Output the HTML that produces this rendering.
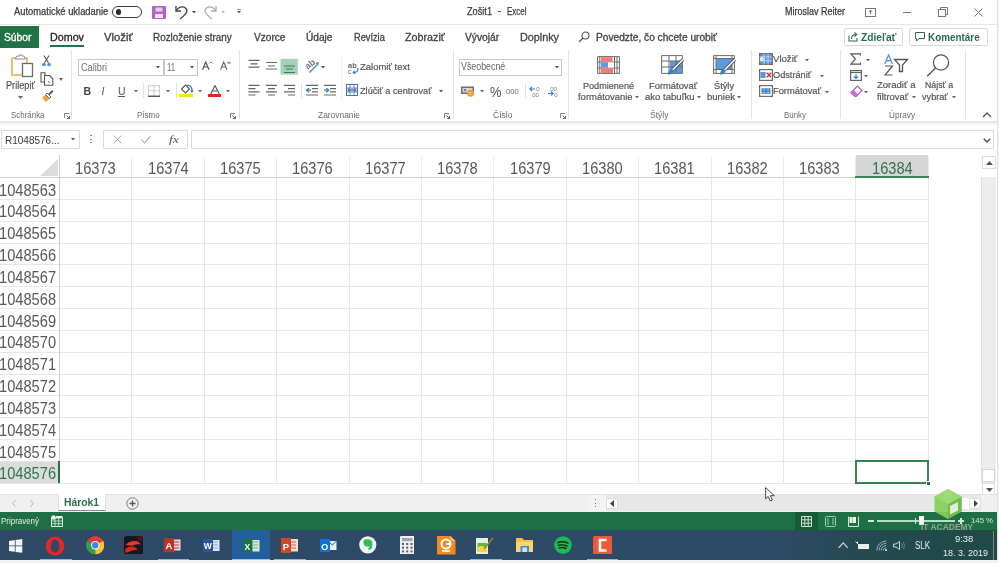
<!DOCTYPE html>
<html><head><meta charset="utf-8">
<style>
*{margin:0;padding:0;box-sizing:border-box}
html,body{width:999px;height:563px;overflow:hidden;background:#fff;font-family:"Liberation Sans",sans-serif;color:#444}
body{filter:blur(0.35px)}
.a{position:absolute}
.t{position:absolute;white-space:nowrap;line-height:1}
#grid{position:absolute;left:0;top:155px;width:981px;height:339px;background:#fff}
.vl{position:absolute;top:0;width:1px;background:#dadada}
.hl{position:absolute;left:0;height:1px;background:#dadada}
.rn{position:absolute;left:0;width:59px;text-align:center;font-size:16px;letter-spacing:-1px;color:#444;line-height:22px}
.cn{position:absolute;top:155px;height:22px;text-align:center;font-size:16px;letter-spacing:-1px;color:#444;line-height:22px}
</style></head><body>
<!-- title bar -->
<div class="a" style="left:0;top:24px;width:997px;height:1px;background:#e6e6e6"></div>
<div class="t" style="top:6.84px;left:13.8px;font-size:10px;color:#3a3a3a;-webkit-text-stroke:0.25px currentColor;;transform:scaleX(0.937);transform-origin:0 0">Automatické ukladanie</div>
<div class="a" style="left:111.5px;top:5.5px;width:30px;height:12px;border:1.3px solid #3a3a3a;border-radius:6px"></div>
<div class="a" style="left:115.5px;top:9px;width:5.5px;height:5.5px;background:#2a2a2a;border-radius:50%"></div>
<svg class="a" style="left:152px;top:6px" width="14" height="13" viewBox="0 0 14 13"><rect x="0" y="0" width="14" height="13" rx="1" fill="#b163c4"/><rect x="3.5" y="1.5" width="7" height="4" fill="#e9c9f0"/><rect x="3" y="8" width="8" height="4" fill="#f4e4f7"/></svg>
<svg class="a" style="left:174px;top:4px" width="15" height="16" viewBox="0 0 15 16"><path d="M2 2 V7 H7" fill="none" stroke="#444" stroke-width="1.4"/><path d="M2.4 6.6 C4.5 3 8.5 2 11.5 4 C14.5 6.5 13 10 6 15" fill="none" stroke="#444" stroke-width="1.3"/></svg>
<svg class="a" style="left:191.8px;top:10.5px" width="4" height="2.5" viewBox="0 0 4 2.5"><path d="M0 0 H4 L2 2.5 Z" fill="#444"/></svg>
<svg class="a" style="left:203px;top:4px" width="15" height="16" viewBox="0 0 15 16"><path d="M13 2 V7 H8" fill="none" stroke="#aaa" stroke-width="1.3"/><path d="M12.6 6.6 C10.5 3 6.5 2 3.5 4 C0.5 6.5 2 10 9 15" fill="none" stroke="#aaa" stroke-width="1.2"/></svg>
<svg class="a" style="left:220.5px;top:10.5px" width="4" height="2.5" viewBox="0 0 4 2.5"><path d="M0 0 H4 L2 2.5 Z" fill="#bbb"/></svg>
<div class="a" style="left:236.5px;top:9px;width:4px;height:0.8px;background:#999"></div>
<svg class="a" style="left:236.5px;top:10.5px" width="4" height="2.5" viewBox="0 0 4 2.5"><path d="M0 0 H4 L2 2.5 Z" fill="#555"/></svg>
<div class="t" style="top:6.54px;left:466.5px;font-size:10px;color:#3a3a3a;-webkit-text-stroke:0.25px currentColor;;transform:scaleX(0.918);transform-origin:0 0">Zošit1</div><div class="a" style="left:497.5px;top:10.5px;width:3px;height:1.3px;background:#555"></div><div class="t" style="top:6.54px;left:506.5px;font-size:10px;color:#3a3a3a;-webkit-text-stroke:0.25px currentColor;;transform:scaleX(0.797);transform-origin:0 0">Excel</div>
<div class="t" style="top:6.73px;left:785px;font-size:10px;color:#3a3a3a;-webkit-text-stroke:0.25px currentColor;;transform:scaleX(0.900);transform-origin:0 0">Miroslav Reiter</div>
<svg class="a" style="left:865px;top:8px" width="11" height="9" viewBox="0 0 11 9"><rect x="0.5" y="0.5" width="10" height="8" fill="none" stroke="#777" stroke-width="1"/><path d="M5.5 6 L5.5 2.5 M3.8 4 L5.5 2.3 L7.2 4" fill="none" stroke="#777" stroke-width="1"/></svg>
<div class="a" style="left:903px;top:12px;width:8px;height:1px;background:#777"></div>
<svg class="a" style="left:938px;top:7px" width="10" height="10" viewBox="0 0 10 10"><rect x="0.5" y="2.5" width="7" height="7" fill="none" stroke="#777"/><path d="M2.5 2.5 V0.5 H9.5 V7.5 H7.5" fill="none" stroke="#777"/></svg>
<svg class="a" style="left:973.5px;top:7.5px" width="9" height="9" viewBox="0 0 9 9"><path d="M0.5 0.5 L8.5 8.5 M8.5 0.5 L0.5 8.5" stroke="#777" stroke-width="1"/></svg>

<!-- tabs -->
<div class="a" style="left:0;top:26px;width:39px;height:22px;background:#217346"></div>
<div class="t" style="top:32.73px;left:4px;font-size:10px;-webkit-text-stroke:0.3px currentColor;color:#fff;;transform:scaleX(1.023);transform-origin:0 0">Súbor</div>
<div class="t" style="top:32.73px;left:50px;font-size:10px;-webkit-text-stroke:0.3px currentColor;color:#262626;;transform:scaleX(1.073);transform-origin:0 0">Domov</div>
<div class="a" style="left:50px;top:45px;width:34px;height:2px;background:#217346"></div>
<div class="t" style="top:32.73px;left:103.8px;font-size:10px;-webkit-text-stroke:0.3px currentColor;;transform:scaleX(1.128);transform-origin:0 0">Vložiť</div>
<div class="t" style="top:32.73px;left:153px;font-size:10px;-webkit-text-stroke:0.3px currentColor;;transform:scaleX(0.990);transform-origin:0 0">Rozloženie strany</div>
<div class="t" style="top:32.73px;left:254px;font-size:10px;-webkit-text-stroke:0.3px currentColor;;transform:scaleX(1.012);transform-origin:0 0">Vzorce</div>
<div class="t" style="top:32.73px;left:306px;font-size:10px;-webkit-text-stroke:0.3px currentColor;;transform:scaleX(1.014);transform-origin:0 0">Údaje</div>
<div class="t" style="top:32.73px;left:354px;font-size:10px;-webkit-text-stroke:0.3px currentColor;;transform:scaleX(0.923);transform-origin:0 0">Revízia</div>
<div class="t" style="top:32.73px;left:405px;font-size:10px;-webkit-text-stroke:0.3px currentColor;;transform:scaleX(1.073);transform-origin:0 0">Zobraziť</div>
<div class="t" style="top:32.73px;left:464.8px;font-size:10px;-webkit-text-stroke:0.3px currentColor;;transform:scaleX(1.025);transform-origin:0 0">Vývojár</div>
<div class="t" style="top:32.73px;left:520px;font-size:10px;-webkit-text-stroke:0.3px currentColor;;transform:scaleX(1.079);transform-origin:0 0">Doplnky</div>
<svg class="a" style="left:578px;top:31px" width="12" height="12" viewBox="0 0 12 12"><circle cx="7.5" cy="4.5" r="3.5" fill="none" stroke="#555" stroke-width="1.1"/><path d="M5 7 L1 11" stroke="#555" stroke-width="1.2"/></svg>
<div class="t" style="top:32.73px;left:596px;font-size:10px;-webkit-text-stroke:0.3px currentColor;;transform:scaleX(1.017);transform-origin:0 0">Povedzte, čo chcete urobiť</div>
<div class="a" style="left:843.5px;top:28px;width:59.5px;height:18px;border:1px solid #d8d8d8;border-radius:2px"></div>
<svg class="a" style="left:848px;top:31px" width="11" height="11" viewBox="0 0 11 11"><path d="M1 4.5 V10 H9 V7" fill="none" stroke="#2e6b4b" stroke-width="1.1"/><path d="M3.5 8 C3.5 5 5 3.5 8 3.5 M6.5 1.5 L8.8 3.5 L6.5 5.5" fill="none" stroke="#2e6b4b" stroke-width="1.1"/></svg>
<div class="t" style="top:31.89px;left:861.3px;font-size:11px;font-weight:bold;color:#2e6b4b;;transform:scaleX(0.928);transform-origin:0 0">Zdieľať</div>
<div class="a" style="left:909px;top:28px;width:78.5px;height:18px;border:1px solid #d8d8d8;border-radius:2px"></div>
<svg class="a" style="left:915px;top:32px" width="10" height="10" viewBox="0 0 10 10"><path d="M0.5 0.5 H9.5 V6.5 H4 L1.5 9 V6.5 H0.5 Z" fill="none" stroke="#2e6b4b" stroke-width="1"/></svg>
<div class="t" style="top:31.89px;left:928px;font-size:11px;font-weight:bold;color:#2e6b4b;;transform:scaleX(0.900);transform-origin:0 0">Komentáre</div>
<!-- ribbon -->
<!-- separators -->
<div class="a" style="left:70.5px;top:50px;width:1px;height:69px;background:#e3e3e3"></div>
<div class="a" style="left:238.5px;top:50px;width:1px;height:69px;background:#e3e3e3"></div>
<div class="a" style="left:452.5px;top:50px;width:1px;height:69px;background:#e3e3e3"></div>
<div class="a" style="left:568px;top:50px;width:1px;height:69px;background:#e3e3e3"></div>
<div class="a" style="left:750.5px;top:50px;width:1px;height:69px;background:#e3e3e3"></div>
<div class="a" style="left:839.5px;top:50px;width:1px;height:69px;background:#e3e3e3"></div>
<div class="a" style="left:964.5px;top:50px;width:1px;height:69px;background:#e3e3e3"></div>
<!-- group labels -->
<div class="t" style="top:111.40px;left:10.5px;font-size:8.5px;color:#6a6a6a;;transform:scaleX(0.933);transform-origin:0 0">Schránka</div>
<div class="t" style="top:111.40px;left:137.4px;font-size:8.5px;color:#6a6a6a;;transform:scaleX(0.938);transform-origin:0 0">Písmo</div>
<div class="t" style="top:111.40px;left:317.5px;font-size:8.5px;color:#6a6a6a;;transform:scaleX(0.988);transform-origin:0 0">Zarovnanie</div>
<div class="t" style="top:111.40px;left:493px;font-size:8.5px;color:#6a6a6a;;transform:scaleX(1.006);transform-origin:0 0">Číslo</div>
<div class="t" style="top:111.40px;left:650px;font-size:8.5px;color:#6a6a6a;;transform:scaleX(1.004);transform-origin:0 0">Štýly</div>
<div class="t" style="top:111.40px;left:784px;font-size:8.5px;color:#6a6a6a;;transform:scaleX(0.931);transform-origin:0 0">Bunky</div>
<div class="t" style="top:111.40px;left:889px;font-size:8.5px;color:#6a6a6a;;transform:scaleX(0.965);transform-origin:0 0">Úpravy</div>
<!-- launchers -->
<svg class="a" style="left:64px;top:113px" width="6" height="6" viewBox="0 0 6 6"><path d="M0.5 5 V0.5 H5" fill="none" stroke="#777" stroke-width="0.9"/><path d="M2.5 2.5 L5.5 5.5 M5.5 3 V5.5 H3" fill="none" stroke="#555" stroke-width="0.9"/></svg>
<svg class="a" style="left:229.5px;top:113px" width="6" height="6" viewBox="0 0 6 6"><path d="M0.5 5 V0.5 H5" fill="none" stroke="#777" stroke-width="0.9"/><path d="M2.5 2.5 L5.5 5.5 M5.5 3 V5.5 H3" fill="none" stroke="#555" stroke-width="0.9"/></svg>
<svg class="a" style="left:443.5px;top:113px" width="6" height="6" viewBox="0 0 6 6"><path d="M0.5 5 V0.5 H5" fill="none" stroke="#777" stroke-width="0.9"/><path d="M2.5 2.5 L5.5 5.5 M5.5 3 V5.5 H3" fill="none" stroke="#555" stroke-width="0.9"/></svg>
<svg class="a" style="left:559.5px;top:113px" width="6" height="6" viewBox="0 0 6 6"><path d="M0.5 5 V0.5 H5" fill="none" stroke="#777" stroke-width="0.9"/><path d="M2.5 2.5 L5.5 5.5 M5.5 3 V5.5 H3" fill="none" stroke="#555" stroke-width="0.9"/></svg>
<svg class="a" style="left:982px;top:112px" width="10" height="6" viewBox="0 0 10 6"><path d="M1 5 L5 1 L9 5" fill="none" stroke="#555" stroke-width="1.3"/></svg>

<!-- Schranka -->
<svg class="a" style="left:10px;top:53px" width="24" height="25" viewBox="0 0 24 25">
<path d="M2 5 H6 M14 5 H17 V14" fill="none" stroke="#f0a950" stroke-width="1.6"/>
<path d="M2 5 V22 H12" fill="none" stroke="#f0a950" stroke-width="1.6"/>
<path d="M5 6 L7 3 H9.5 L10.5 1.2 L12 3 H14 L15.5 6 Z" fill="#fff" stroke="#888" stroke-width="1"/>
<rect x="12.5" y="10.5" width="10" height="13" fill="#fff" stroke="#6b6b6b" stroke-width="1.3"/>
</svg>
<div class="t" style="top:80.53px;left:5.9px;font-size:10px;color:#555;-webkit-text-stroke:0.2px currentColor;;transform:scaleX(0.916);transform-origin:0 0">Prilepiť</div>
<svg class="a" style="left:17.5px;top:96px" width="5" height="3" viewBox="0 0 5 3"><path d="M0 0 H5 L2.5 3 Z" fill="#666"/></svg>
<svg class="a" style="left:42px;top:55px" width="9" height="12" viewBox="0 0 9 12"><path d="M2 0.5 L6.5 8 M7 0.5 L2.5 8" stroke="#555" stroke-width="1.1"/><circle cx="2" cy="9.5" r="1.8" fill="#4a90d9"/><circle cx="7" cy="9.5" r="1.8" fill="#4a90d9"/></svg>
<svg class="a" style="left:40px;top:72px" width="14" height="14" viewBox="0 0 14 14"><path d="M5 3 V0.8 H1 V10 H4" fill="none" stroke="#555" stroke-width="1.1"/><path d="M4.5 3.5 H9.5 L12.8 6.8 V13.3 H4.5 Z" fill="#fff" stroke="#555" stroke-width="1.1"/><path d="M8 9 L10 11" stroke="#777" stroke-width="1"/></svg>
<svg class="a" style="left:58.5px;top:78px" width="4" height="3" viewBox="0 0 4 3"><path d="M0 0 H4 L2 3 Z" fill="#666"/></svg>
<svg class="a" style="left:40.5px;top:89.5px" width="13" height="13" viewBox="0 0 13 13"><path d="M1 8 L5 12 L8.5 8.5 L4.5 4.5 Z" fill="#f4a340"/><path d="M4.5 4.5 L8.5 8.5 L10 7 L6 3 Z" fill="#fff" stroke="#666" stroke-width="1"/><path d="M8 4.5 L11.8 0.8" stroke="#555" stroke-width="2"/></svg>

<!-- Pismo -->
<div class="a" style="left:77.5px;top:59px;width:86.5px;height:16.5px;border:1px solid #c6c6c6;background:#fff"></div>
<div class="a" style="left:163.5px;top:59px;width:34px;height:16.5px;border:1px solid #c6c6c6;background:#fff"></div>
<div class="t" style="top:62.53px;left:80.5px;font-size:10px;color:#6e6e6e;;transform:scaleX(0.917);transform-origin:0 0">Calibri</div>
<svg class="a" style="left:156px;top:66px" width="4" height="2.5" viewBox="0 0 4 2.5"><path d="M0 0 H4 L2 2.5 Z" fill="#555"/></svg>
<div class="t" style="top:62.53px;left:167px;font-size:10px;color:#6e6e6e;;transform:scaleX(0.770);transform-origin:0 0">11</div>
<svg class="a" style="left:190px;top:66px" width="4" height="2.5" viewBox="0 0 4 2.5"><path d="M0 0 H4 L2 2.5 Z" fill="#555"/></svg>
<svg class="a" style="left:202px;top:61px" width="11" height="9" viewBox="0 0 11 9"><path d="M0.5 8.8 L3.7 1 L7 8.8 M1.7 6 H5.8" fill="none" stroke="#555" stroke-width="1.2"/><path d="M7.5 2.5 L9 1 L10.5 2.5" fill="none" stroke="#4a90d9" stroke-width="1"/></svg>
<svg class="a" style="left:220px;top:61px" width="11" height="9" viewBox="0 0 11 9"><path d="M0.5 8.8 L3.7 1 L7 8.8 M1.7 6 H5.8" fill="none" stroke="#666" stroke-width="1.1"/><path d="M7.5 1 L9 2.5 L10.5 1" fill="none" stroke="#4a90d9" stroke-width="1.1"/></svg>
<div class="t" style="top:85.61px;left:83.5px;font-size:10.5px;font-weight:bold;color:#444">B</div>
<div class="t" style="top:85.61px;left:101.5px;font-size:10.5px;font-style:italic;color:#555">I</div>
<div class="t" style="top:85.61px;left:118px;font-size:10.5px;color:#555">U</div>
<div class="a" style="left:118px;top:96px;width:7px;height:1px;background:#555"></div>
<svg class="a" style="left:134px;top:89.5px" width="4" height="2.5" viewBox="0 0 4 2.5"><path d="M0 0 H4 L2 2.5 Z" fill="#666"/></svg>
<div class="a" style="left:143px;top:83px;width:1px;height:15px;background:#e3e3e3"></div>
<svg class="a" style="left:148px;top:85px" width="12" height="12" viewBox="0 0 12 12"><path d="M0.5 0.5 H11.5 V11 H0.5 Z M6 0.5 V11 M0.5 5.75 H11.5" fill="none" stroke="#aaa" stroke-width="0.9" stroke-dasharray="1 0.6"/><path d="M0 11.3 H12" stroke="#555" stroke-width="1.3"/></svg>
<svg class="a" style="left:166px;top:89.5px" width="4" height="2.5" viewBox="0 0 4 2.5"><path d="M0 0 H4 L2 2.5 Z" fill="#666"/></svg>
<div class="a" style="left:175.5px;top:83px;width:1px;height:15px;background:#e3e3e3"></div>
<svg class="a" style="left:180px;top:84px" width="14" height="10" viewBox="0 0 14 10"><path d="M1.5 5 L5.5 1 L9.5 5 L5.5 9 Z" fill="#fff" stroke="#555" stroke-width="1.1"/><path d="M7 1.5 C10 1 12 3 12 6.5" fill="none" stroke="#3a7fc8" stroke-width="1.4"/><circle cx="12" cy="7" r="1.3" fill="#3a7fc8"/></svg>
<div class="a" style="left:179px;top:94px;width:14px;height:3px;background:#f6e61f"></div>
<svg class="a" style="left:198px;top:89.5px" width="4" height="2.5" viewBox="0 0 4 2.5"><path d="M0 0 H4 L2 2.5 Z" fill="#666"/></svg>
<svg class="a" style="left:210px;top:84.5px" width="10" height="9" viewBox="0 0 10 9"><path d="M0.7 9 L5 0.5 L9.3 9 M2.3 6 H7.7" fill="none" stroke="#555" stroke-width="1.1"/></svg>
<div class="a" style="left:208px;top:94px;width:12.5px;height:3px;background:#e8221c"></div>
<svg class="a" style="left:226px;top:89.5px" width="4" height="2.5" viewBox="0 0 4 2.5"><path d="M0 0 H4 L2 2.5 Z" fill="#666"/></svg>
<!-- Zarovnanie -->
<svg class="a" style="left:248px;top:58px" width="50" height="17" viewBox="0 0 50 17">
<path d="M0.5 2.4 H11.5 M2.5 5.8 H9.5 M0.5 9.2 H11.5" stroke="#666" stroke-width="1.2"/>
<path d="M18 4.5 H29 M20 8 H27 M18 11 H29" stroke="#666" stroke-width="1.2"/>
<rect x="32.5" y="0.8" width="17.3" height="15.8" fill="#a3d2b6"/>
<path d="M36 8 H47 M38 11 H45 M36 14.5 H47" stroke="#3d7a55" stroke-width="1.2"/>
</svg>
<svg class="a" style="left:304px;top:58px" width="20" height="16" viewBox="0 0 20 16"><text x="1" y="10" font-size="9" font-weight="bold" font-family="Liberation Sans" fill="#777" transform="rotate(-40 5 7)">ab</text><path d="M5.5 14.5 L13.5 6.5" stroke="#4a90d9" stroke-width="1.5"/><path d="M11.5 5 L15 4 L14 7.5 Z" fill="#3a7fc8"/></svg>
<svg class="a" style="left:321px;top:66px" width="4" height="2.5" viewBox="0 0 4 2.5"><path d="M0 0 H4 L2 2.5 Z" fill="#555"/></svg>
<svg class="a" style="left:248px;top:84px" width="90" height="13" viewBox="0 0 90 13">
<path d="M0.5 1.4 H11.5 M0.5 4.6 H7.5 M0.5 7.8 H11.5 M0.5 11 H7.5" stroke="#666" stroke-width="1.2"/>
<path d="M18 1.4 H29 M20 4.6 H27 M18 7.8 H29 M20 11 H27" stroke="#666" stroke-width="1.2"/>
<path d="M36 1.4 H47 M40 4.6 H47 M36 7.8 H47 M40 11 H47" stroke="#666" stroke-width="1.2"/>
<path d="M58 1.4 H70 M64 4.6 H70 M64 7.8 H70 M58 11 H70" stroke="#666" stroke-width="1.2"/>
<path d="M58.5 6.2 H63 M61 4.2 L58.5 6.2 L61 8.2" fill="none" stroke="#3a7fc8" stroke-width="1.3"/>
<path d="M76 1.4 H88 M82 4.6 H88 M82 7.8 H88 M76 11 H88" stroke="#666" stroke-width="1.2"/>
<path d="M76 6.2 H80.5 M78.3 4.2 L80.8 6.2 L78.3 8.2" fill="none" stroke="#3a7fc8" stroke-width="1.3"/>
</svg>
<div class="a" style="left:300.5px;top:83px;width:1px;height:15px;background:#e3e3e3"></div>
<div class="a" style="left:340.8px;top:56px;width:1px;height:44px;background:#f0f0f0"></div>
<svg class="a" style="left:347.5px;top:61.5px" width="12" height="12" viewBox="0 0 12 12"><text x="0" y="6" font-size="7.5" font-weight="bold" font-family="Liberation Sans" fill="#666">ab</text><text x="0" y="11.8" font-size="7" font-family="Liberation Sans" fill="#666">c</text><path d="M9.8 6 C10.5 9 9 10.5 5.5 10.5 M7 9 L5.3 10.5 L7 12" fill="none" stroke="#3a7fc8" stroke-width="1.2"/></svg>
<div class="t" style="top:62.26px;left:359.8px;font-size:9.5px;color:#555;-webkit-text-stroke:0.2px currentColor;;transform:scaleX(0.995);transform-origin:0 0">Zalomiť text</div>
<svg class="a" style="left:346px;top:84px" width="12" height="12" viewBox="0 0 12 12"><rect x="0.5" y="0.5" width="11" height="11" fill="#fff" stroke="#5a6f8c" stroke-width="1"/><rect x="1" y="4" width="10" height="4" fill="#bcd6f2"/><path d="M0.5 4 H11.5 M0.5 8 H11.5 M4 0.5 V4 M8 0.5 V4 M4 8 V11.5 M8 8 V11.5" stroke="#5a6f8c" stroke-width="0.8"/><path d="M2 6 H10 M4 4.6 L2 6 L4 7.4 M8 4.6 L10 6 L8 7.4" fill="none" stroke="#1f64b8" stroke-width="1"/></svg>
<div class="t" style="top:86.36px;left:359.8px;font-size:9.5px;color:#555;-webkit-text-stroke:0.2px currentColor;;transform:scaleX(0.965);transform-origin:0 0">Zlúčiť a centrovať</div>
<svg class="a" style="left:439.3px;top:90px" width="4" height="2.5" viewBox="0 0 4 2.5"><path d="M0 0 H4 L2 2.5 Z" fill="#555"/></svg>

<!-- Cislo -->
<div class="a" style="left:459px;top:59px;width:102.5px;height:16.5px;border:1px solid #c6c6c6;background:#fff"></div>
<div class="t" style="top:61.94px;left:461.3px;font-size:10px;color:#666;;transform:scaleX(0.885);transform-origin:0 0">Všeobecné</div>
<svg class="a" style="left:555px;top:65.5px" width="4" height="2.5" viewBox="0 0 4 2.5"><path d="M0 0 H4 L2 2.5 Z" fill="#555"/></svg>
<svg class="a" style="left:461px;top:86px" width="14" height="11" viewBox="0 0 14 11"><rect x="0" y="0.5" width="13" height="7.5" fill="#6f6f6f"/><rect x="1.5" y="2" width="10" height="4.5" fill="#d8d8d8"/><path d="M3 3 L5 5.5 M5 3 L3 5.5" stroke="#555" stroke-width="0.8"/><circle cx="9.5" cy="7.3" r="3.5" fill="#f39a3a"/><path d="M7.6 6.6 H11.4 M7.6 8.2 H11.4" stroke="#fbd7a8" stroke-width="0.7"/></svg>
<svg class="a" style="left:479.5px;top:90px" width="4" height="2.5" viewBox="0 0 4 2.5"><path d="M0 0 H4 L2 2.5 Z" fill="#666"/></svg>
<div class="t" style="top:84.65px;left:489.5px;font-size:14px;color:#555;;transform:scaleX(0.923);transform-origin:0 0">%</div>
<div class="t" style="top:87.53px;left:506.2px;font-size:8px;color:#666;;transform:scaleX(0.951);transform-origin:0 0">000</div>
<div class="a" style="left:524.5px;top:83px;width:1px;height:15px;background:#e3e3e3"></div>
<svg class="a" style="left:528.5px;top:85px" width="13" height="12" viewBox="0 0 13 12"><path d="M1 4 H6 M3 2 L1 4 L3 6" fill="none" stroke="#3a7fc8" stroke-width="1.2"/><text x="7.2" y="6" font-size="6" font-family="Liberation Sans" fill="#777">0</text><text x="1.5" y="11.8" font-size="6" font-family="Liberation Sans" fill="#777">.00</text></svg>
<svg class="a" style="left:546.5px;top:85px" width="13" height="12" viewBox="0 0 13 12"><text x="1.5" y="5.5" font-size="6" font-family="Liberation Sans" fill="#777">.00</text><path d="M1 8.5 H6 M4 6.5 L6 8.5 L4 10.5" fill="none" stroke="#3a7fc8" stroke-width="1.2"/><text x="7.2" y="11.8" font-size="6" font-family="Liberation Sans" fill="#777">0</text></svg>

<!-- Styly -->
<svg class="a" style="left:597px;top:56px" width="23" height="18" viewBox="0 0 23 18">
<path d="M0.6 0.6 H22.4 V17.4 H0.6 Z M0.6 6 H22.4 M0.6 12 H22.4 M2.8 0.6 V17.4 M17.5 0.6 V17.4 M20 0.6 V17.4" fill="none" stroke="#6b6b6b" stroke-width="1"/>
<rect x="4" y="1.2" width="11.5" height="4.8" fill="#f07b7b"/><rect x="4" y="12" width="12" height="5" fill="#f07b7b"/><rect x="4" y="6.5" width="7" height="5" fill="#5b9be0"/><rect x="11" y="6.5" width="6" height="5" fill="#fff"/>
</svg>
<svg class="a" style="left:661px;top:55px" width="25" height="20" viewBox="0 0 25 20">
<rect x="9" y="6" width="12" height="12" fill="#5b9be0"/>
<path d="M0.6 0.6 H21.4 V18.4 H0.6 Z M0.6 6 H21.4 M0.6 12 H21.4 M8 0.6 V18.4 M15 0.6 V18.4" fill="none" stroke="#6b6b6b" stroke-width="1"/>
<path d="M11.5 15 L22 4.5" stroke="#555" stroke-width="3.2"/><path d="M11.5 15 L22 4.5" stroke="#fff" stroke-width="1.6"/>
<path d="M7 19.5 C7 16 9 14 11.5 14.5 L12.5 15.5 C12.5 18.5 10 19.8 7 19.5 Z" fill="#3a7fc8"/>
</svg>
<svg class="a" style="left:712.5px;top:55px" width="25" height="20" viewBox="0 0 25 20">
<rect x="3" y="3.5" width="16" height="11" fill="#5b9be0"/>
<path d="M0.6 0.6 H21.4 V18.4 H0.6 Z M0.6 3.5 H21.4 M3 0.6 V18.4 M19 0.6 V18.4 M0.6 14.5 H21.4" fill="none" stroke="#6b6b6b" stroke-width="1"/>
<path d="M11.5 15 L22 4.5" stroke="#555" stroke-width="3.2"/><path d="M11.5 15 L22 4.5" stroke="#fff" stroke-width="1.6"/>
<path d="M7 19.5 C7 16 9 14 11.5 14.5 L12.5 15.5 C12.5 18.5 10 19.8 7 19.5 Z" fill="#3a7fc8"/>
</svg>
<div class="t" style="top:80.76px;left:583px;font-size:9.5px;color:#555;-webkit-text-stroke:0.2px currentColor;;transform:scaleX(0.956);transform-origin:0 0">Podmienené</div>
<div class="t" style="top:92.46px;left:577.6px;font-size:9.5px;color:#555;-webkit-text-stroke:0.2px currentColor;;transform:scaleX(0.994);transform-origin:0 0">formátovanie</div>
<svg class="a" style="left:635px;top:96px" width="4" height="2.5" viewBox="0 0 4 2.5"><path d="M0 0 H4 L2 2.5 Z" fill="#666"/></svg>
<div class="t" style="top:80.76px;left:648.7px;font-size:9.5px;color:#555;-webkit-text-stroke:0.2px currentColor;;transform:scaleX(0.986);transform-origin:0 0">Formátovať</div>
<div class="t" style="top:92.46px;left:644.8px;font-size:9.5px;color:#555;-webkit-text-stroke:0.2px currentColor;;transform:scaleX(1.005);transform-origin:0 0">ako tabuľku</div>
<svg class="a" style="left:696.8px;top:96px" width="4" height="2.5" viewBox="0 0 4 2.5"><path d="M0 0 H4 L2 2.5 Z" fill="#666"/></svg>
<div class="t" style="top:80.76px;left:714px;font-size:9.5px;color:#555;-webkit-text-stroke:0.2px currentColor;;transform:scaleX(0.971);transform-origin:0 0">Štýly</div>
<div class="t" style="top:92.46px;left:707px;font-size:9.5px;color:#555;-webkit-text-stroke:0.2px currentColor;;transform:scaleX(0.996);transform-origin:0 0">buniek</div>
<svg class="a" style="left:737.4px;top:96px" width="4" height="2.5" viewBox="0 0 4 2.5"><path d="M0 0 H4 L2 2.5 Z" fill="#666"/></svg>

<!-- Bunky -->
<svg class="a" style="left:759px;top:53px" width="14" height="12" viewBox="0 0 14 12"><rect x="0.6" y="0.6" width="12.8" height="10.8" fill="#5b9be0" stroke="#6b6b6b" stroke-width="1.2"/><path d="M0.6 4 H13.4 M0.6 7.8 H13.4 M5 0.6 V11.4 M9 0.6 V11.4" stroke="#fff" stroke-width="0.9" stroke-dasharray="1.2 0.8"/><path d="M6 6 H1.5 M3.5 4 L1.5 6 L3.5 8" fill="none" stroke="#fff" stroke-width="1.2"/></svg>
<div class="t" style="top:54.26px;left:773.3px;font-size:9.5px;color:#555;-webkit-text-stroke:0.2px currentColor;;transform:scaleX(1.010);transform-origin:0 0">Vložiť</div>
<svg class="a" style="left:804.5px;top:58.5px" width="4" height="2.5" viewBox="0 0 4 2.5"><path d="M0 0 H4 L2 2.5 Z" fill="#666"/></svg>
<svg class="a" style="left:759px;top:69px" width="14" height="12" viewBox="0 0 14 12"><rect x="0.6" y="0.6" width="12.8" height="10.8" fill="#fff" stroke="#6b6b6b" stroke-width="1.2"/><rect x="1.5" y="3" width="5" height="6" fill="#5b9be0"/><path d="M0.6 4 H13.4 M0.6 7.8 H13.4" stroke="#888" stroke-width="0.8" stroke-dasharray="1.2 0.8"/><path d="M8 4 L12 8 M12 4 L8 8" stroke="#e02b2b" stroke-width="1.2"/></svg>
<div class="t" style="top:70.36px;left:773.3px;font-size:9.5px;color:#555;-webkit-text-stroke:0.2px currentColor;;transform:scaleX(0.968);transform-origin:0 0">Odstrániť</div>
<svg class="a" style="left:820.2px;top:74.5px" width="4" height="2.5" viewBox="0 0 4 2.5"><path d="M0 0 H4 L2 2.5 Z" fill="#666"/></svg>
<svg class="a" style="left:759px;top:85px" width="14" height="12" viewBox="0 0 14 12"><rect x="0.6" y="0.6" width="12.8" height="10.8" fill="#fff" stroke="#6b6b6b" stroke-width="1.2"/><rect x="2.5" y="3" width="9" height="6" fill="#3a7fc8"/><path d="M0.6 4 H13.4 M0.6 7.8 H13.4 M5 0.6 V11.4 M9 0.6 V11.4" stroke="#fff" stroke-width="0.7" stroke-dasharray="1.2 0.8"/></svg>
<div class="t" style="top:86.36px;left:773.3px;font-size:9.5px;color:#555;-webkit-text-stroke:0.2px currentColor;;transform:scaleX(0.980);transform-origin:0 0">Formátovať</div>
<svg class="a" style="left:825px;top:90.5px" width="4" height="2.5" viewBox="0 0 4 2.5"><path d="M0 0 H4 L2 2.5 Z" fill="#666"/></svg>

<!-- Upravy -->
<svg class="a" style="left:850px;top:53px" width="11" height="12" viewBox="0 0 11 12"><path d="M10.5 2.5 V0.8 H0.8 L5.5 6 L0.8 11.2 H10.5 V9.5" fill="none" stroke="#555" stroke-width="1.2"/></svg>
<svg class="a" style="left:866.4px;top:58.5px" width="4" height="2.5" viewBox="0 0 4 2.5"><path d="M0 0 H4 L2 2.5 Z" fill="#666"/></svg>
<svg class="a" style="left:850px;top:69.5px" width="12" height="11" viewBox="0 0 12 11"><rect x="0.6" y="0.6" width="10.8" height="9.8" fill="#fff" stroke="#666" stroke-width="1.2"/><path d="M0.6 2.5 H11.4" stroke="#666" stroke-width="1.2"/><path d="M6 4 V8.5 M4 6.5 L6 8.5 L8 6.5" fill="none" stroke="#3a7fc8" stroke-width="1.1"/></svg>
<svg class="a" style="left:864px;top:74.5px" width="4" height="2.5" viewBox="0 0 4 2.5"><path d="M0 0 H4 L2 2.5 Z" fill="#666"/></svg>
<svg class="a" style="left:849.5px;top:85px" width="13" height="12" viewBox="0 0 13 12"><path d="M1 7.5 L7.5 1 L12 5.5 L5.5 12 Z" fill="#fff" stroke="#b14fc5" stroke-width="1.2"/><path d="M1 7.5 L3.5 5 L8 9.5 L5.5 12 Z" fill="#c86ad8"/></svg>
<svg class="a" style="left:864px;top:90.5px" width="4" height="2.5" viewBox="0 0 4 2.5"><path d="M0 0 H4 L2 2.5 Z" fill="#666"/></svg>
<svg class="a" style="left:884px;top:54px" width="25" height="22" viewBox="0 0 25 22"><path d="M0.8 10 L4.6 0.8 L8.4 10 M2.2 6.7 H7" fill="none" stroke="#4a90d9" stroke-width="1.2"/><path d="M1 12 H8.5 L1 21 H8.5" fill="none" stroke="#555" stroke-width="1.2"/><path d="M10.5 5.5 H23.5 L18.5 11 V17.5 H15.5 V11 Z" fill="none" stroke="#555" stroke-width="1.3"/></svg>
<svg class="a" style="left:926px;top:53px" width="24" height="25" viewBox="0 0 24 25"><circle cx="15" cy="9.5" r="7.6" fill="none" stroke="#555" stroke-width="1.3"/><path d="M9.5 15 L1.2 23.3" stroke="#555" stroke-width="1.4"/></svg>
<div class="t" style="top:80.16px;left:876.8px;font-size:9.5px;color:#555;-webkit-text-stroke:0.2px currentColor;;transform:scaleX(1.002);transform-origin:0 0">Zoradiť a</div>
<div class="t" style="top:92.26px;left:876.8px;font-size:9.5px;color:#555;-webkit-text-stroke:0.2px currentColor;;transform:scaleX(0.989);transform-origin:0 0">filtrovať</div>
<svg class="a" style="left:912px;top:96px" width="4" height="2.5" viewBox="0 0 4 2.5"><path d="M0 0 H4 L2 2.5 Z" fill="#666"/></svg>
<div class="t" style="top:80.16px;left:924.9px;font-size:9.5px;color:#555;-webkit-text-stroke:0.2px currentColor;;transform:scaleX(0.925);transform-origin:0 0">Nájsť a</div>
<div class="t" style="top:92.26px;left:921.9px;font-size:9.5px;color:#555;-webkit-text-stroke:0.2px currentColor;;transform:scaleX(0.963);transform-origin:0 0">vybrať</div>
<svg class="a" style="left:951.7px;top:96px" width="4" height="2.5" viewBox="0 0 4 2.5"><path d="M0 0 H4 L2 2.5 Z" fill="#666"/></svg>

<!-- ribbon shadow -->
<div class="a" style="left:0;top:120.5px;width:997px;height:4px;background:linear-gradient(#e0e0e0,#eeeeee 50%,#fafafa)"></div>
<!-- formula bar -->
<div class="a" style="left:1px;top:130px;width:78.5px;height:18.5px;border:1px solid #dadada;border-radius:1px;background:#fff"></div>
<div class="t" style="top:134.61px;left:4.5px;font-size:10.5px;color:#3a3a3a;;transform:scaleX(0.952);transform-origin:0 0">R1048576...</div>
<svg class="a" style="left:70.5px;top:138px" width="4" height="2.5" viewBox="0 0 4 2.5"><path d="M0 0 H4 L2 2.5 Z" fill="#555"/></svg>
<div class="a" style="left:90.3px;top:135px;width:1.3px;height:1.3px;background:#888"></div>
<div class="a" style="left:90.3px;top:138.5px;width:1.3px;height:1.3px;background:#888"></div>
<div class="a" style="left:90.3px;top:142px;width:1.3px;height:1.3px;background:#888"></div>
<div class="a" style="left:103px;top:130px;width:85px;height:18.5px;border:1px solid #dadada;border-radius:1px;background:#fff"></div>
<svg class="a" style="left:113px;top:135px" width="9" height="9" viewBox="0 0 9 9"><path d="M0.5 0.5 L8.5 8.5 M8.5 0.5 L0.5 8.5" stroke="#aaa" stroke-width="1"/></svg>
<svg class="a" style="left:141px;top:135px" width="10" height="9" viewBox="0 0 10 9"><path d="M0.5 4.5 L3.5 8 L9.5 0.8" fill="none" stroke="#aaa" stroke-width="1.1"/></svg>
<div class="t" style="top:134.61px;left:169px;font-size:10.5px;font-family:'Liberation Serif',serif;font-style:italic;color:#555;;transform:scaleX(1.320);transform-origin:0 0">fx</div>
<div class="a" style="left:190.5px;top:130px;width:803px;height:18.5px;border:1px solid #dadada;border-radius:1px;background:#fff"></div>
<svg class="a" style="left:983px;top:137.5px" width="8" height="5" viewBox="0 0 8 5"><path d="M0.8 0.8 L4 4 L7.2 0.8" fill="none" stroke="#555" stroke-width="1.6"/></svg>
<div class="a" style="left:855.90px;top:155px;width:72.40px;height:22.5px;background:#d6d6d6"></div>
<div class="a" style="left:0;top:461.46px;width:59.5px;height:21.84px;background:#dcdcdc"></div>
<div class="a" style="left:59.00px;top:157px;width:1px;height:20px;background:#ebebeb"></div>
<div class="a" style="left:59.00px;top:177px;width:1px;height:306.8px;background:#e6e6e6"></div>
<div class="a" style="left:131.40px;top:157px;width:1px;height:20px;background:#ebebeb"></div>
<div class="a" style="left:131.40px;top:177px;width:1px;height:306.8px;background:#e6e6e6"></div>
<div class="a" style="left:203.80px;top:157px;width:1px;height:20px;background:#ebebeb"></div>
<div class="a" style="left:203.80px;top:177px;width:1px;height:306.8px;background:#e6e6e6"></div>
<div class="a" style="left:276.20px;top:157px;width:1px;height:20px;background:#ebebeb"></div>
<div class="a" style="left:276.20px;top:177px;width:1px;height:306.8px;background:#e6e6e6"></div>
<div class="a" style="left:348.60px;top:157px;width:1px;height:20px;background:#ebebeb"></div>
<div class="a" style="left:348.60px;top:177px;width:1px;height:306.8px;background:#e6e6e6"></div>
<div class="a" style="left:421.00px;top:157px;width:1px;height:20px;background:#ebebeb"></div>
<div class="a" style="left:421.00px;top:177px;width:1px;height:306.8px;background:#e6e6e6"></div>
<div class="a" style="left:493.40px;top:157px;width:1px;height:20px;background:#ebebeb"></div>
<div class="a" style="left:493.40px;top:177px;width:1px;height:306.8px;background:#e6e6e6"></div>
<div class="a" style="left:565.80px;top:157px;width:1px;height:20px;background:#ebebeb"></div>
<div class="a" style="left:565.80px;top:177px;width:1px;height:306.8px;background:#e6e6e6"></div>
<div class="a" style="left:638.20px;top:157px;width:1px;height:20px;background:#ebebeb"></div>
<div class="a" style="left:638.20px;top:177px;width:1px;height:306.8px;background:#e6e6e6"></div>
<div class="a" style="left:710.60px;top:157px;width:1px;height:20px;background:#ebebeb"></div>
<div class="a" style="left:710.60px;top:177px;width:1px;height:306.8px;background:#e6e6e6"></div>
<div class="a" style="left:783.00px;top:157px;width:1px;height:20px;background:#ebebeb"></div>
<div class="a" style="left:783.00px;top:177px;width:1px;height:306.8px;background:#e6e6e6"></div>
<div class="a" style="left:855.40px;top:157px;width:1px;height:20px;background:#ebebeb"></div>
<div class="a" style="left:855.40px;top:177px;width:1px;height:306.8px;background:#e6e6e6"></div>
<div class="a" style="left:927.80px;top:157px;width:1px;height:20px;background:#ebebeb"></div>
<div class="a" style="left:927.80px;top:177px;width:1px;height:306.8px;background:#e6e6e6"></div>
<div class="a" style="left:0;top:177.00px;width:929px;height:1px;background:#e6e6e6"></div>
<div class="a" style="left:0;top:198.84px;width:929px;height:1px;background:#e6e6e6"></div>
<div class="a" style="left:0;top:220.69px;width:929px;height:1px;background:#e6e6e6"></div>
<div class="a" style="left:0;top:242.53px;width:929px;height:1px;background:#e6e6e6"></div>
<div class="a" style="left:0;top:264.37px;width:929px;height:1px;background:#e6e6e6"></div>
<div class="a" style="left:0;top:286.21px;width:929px;height:1px;background:#e6e6e6"></div>
<div class="a" style="left:0;top:308.06px;width:929px;height:1px;background:#e6e6e6"></div>
<div class="a" style="left:0;top:329.90px;width:929px;height:1px;background:#e6e6e6"></div>
<div class="a" style="left:0;top:351.74px;width:929px;height:1px;background:#e6e6e6"></div>
<div class="a" style="left:0;top:373.59px;width:929px;height:1px;background:#e6e6e6"></div>
<div class="a" style="left:0;top:395.43px;width:929px;height:1px;background:#e6e6e6"></div>
<div class="a" style="left:0;top:417.27px;width:929px;height:1px;background:#e6e6e6"></div>
<div class="a" style="left:0;top:439.11px;width:929px;height:1px;background:#e6e6e6"></div>
<div class="a" style="left:0;top:460.96px;width:929px;height:1px;background:#e6e6e6"></div>
<div class="a" style="left:0;top:482.80px;width:929px;height:1px;background:#e6e6e6"></div>
<div class="a" style="left:0;top:177.00px;width:929px;height:1px;background:#d0d0d0"></div>
<div class="a" style="left:59.00px;top:155px;width:1px;height:328.8px;background:#cfcfcf"></div>
<svg class="a" style="left:40px;top:159px" width="18" height="17" viewBox="0 0 18 17"><path d="M18 0 V17 H0 Z" fill="#dcdcdc"/></svg>
<div class="t" style="left:75.10px;top:160.03px;font-size:16.5px;color:#585858;transform:scaleX(0.888);transform-origin:0 0">16373</div>
<div class="t" style="left:147.50px;top:160.03px;font-size:16.5px;color:#585858;transform:scaleX(0.888);transform-origin:0 0">16374</div>
<div class="t" style="left:219.90px;top:160.03px;font-size:16.5px;color:#585858;transform:scaleX(0.888);transform-origin:0 0">16375</div>
<div class="t" style="left:292.30px;top:160.03px;font-size:16.5px;color:#585858;transform:scaleX(0.888);transform-origin:0 0">16376</div>
<div class="t" style="left:364.70px;top:160.03px;font-size:16.5px;color:#585858;transform:scaleX(0.888);transform-origin:0 0">16377</div>
<div class="t" style="left:437.10px;top:160.03px;font-size:16.5px;color:#585858;transform:scaleX(0.888);transform-origin:0 0">16378</div>
<div class="t" style="left:509.50px;top:160.03px;font-size:16.5px;color:#585858;transform:scaleX(0.888);transform-origin:0 0">16379</div>
<div class="t" style="left:581.90px;top:160.03px;font-size:16.5px;color:#585858;transform:scaleX(0.888);transform-origin:0 0">16380</div>
<div class="t" style="left:654.30px;top:160.03px;font-size:16.5px;color:#585858;transform:scaleX(0.888);transform-origin:0 0">16381</div>
<div class="t" style="left:726.70px;top:160.03px;font-size:16.5px;color:#585858;transform:scaleX(0.888);transform-origin:0 0">16382</div>
<div class="t" style="left:799.10px;top:160.03px;font-size:16.5px;color:#585858;transform:scaleX(0.888);transform-origin:0 0">16383</div>
<div class="t" style="left:871.50px;top:160.03px;font-size:16.5px;color:#2e7450;transform:scaleX(0.888);transform-origin:0 0">16384</div>
<div class="t" style="left:-0.7px;top:181.53px;font-size:16.5px;color:#585858;transform:scaleX(0.888);transform-origin:0 0">1048563</div>
<div class="t" style="left:-0.7px;top:203.38px;font-size:16.5px;color:#585858;transform:scaleX(0.888);transform-origin:0 0">1048564</div>
<div class="t" style="left:-0.7px;top:225.22px;font-size:16.5px;color:#585858;transform:scaleX(0.888);transform-origin:0 0">1048565</div>
<div class="t" style="left:-0.7px;top:247.06px;font-size:16.5px;color:#585858;transform:scaleX(0.888);transform-origin:0 0">1048566</div>
<div class="t" style="left:-0.7px;top:268.90px;font-size:16.5px;color:#585858;transform:scaleX(0.888);transform-origin:0 0">1048567</div>
<div class="t" style="left:-0.7px;top:290.75px;font-size:16.5px;color:#585858;transform:scaleX(0.888);transform-origin:0 0">1048568</div>
<div class="t" style="left:-0.7px;top:312.59px;font-size:16.5px;color:#585858;transform:scaleX(0.888);transform-origin:0 0">1048569</div>
<div class="t" style="left:-0.7px;top:334.43px;font-size:16.5px;color:#585858;transform:scaleX(0.888);transform-origin:0 0">1048570</div>
<div class="t" style="left:-0.7px;top:356.28px;font-size:16.5px;color:#585858;transform:scaleX(0.888);transform-origin:0 0">1048571</div>
<div class="t" style="left:-0.7px;top:378.12px;font-size:16.5px;color:#585858;transform:scaleX(0.888);transform-origin:0 0">1048572</div>
<div class="t" style="left:-0.7px;top:399.96px;font-size:16.5px;color:#585858;transform:scaleX(0.888);transform-origin:0 0">1048573</div>
<div class="t" style="left:-0.7px;top:421.80px;font-size:16.5px;color:#585858;transform:scaleX(0.888);transform-origin:0 0">1048574</div>
<div class="t" style="left:-0.7px;top:443.65px;font-size:16.5px;color:#585858;transform:scaleX(0.888);transform-origin:0 0">1048575</div>
<div class="t" style="left:-0.7px;top:465.49px;font-size:16.5px;color:#2e7450;transform:scaleX(0.888);transform-origin:0 0">1048576</div>
<div class="a" style="left:855.40px;top:176.2px;width:73.40px;height:1.8px;background:#3a855c"></div>
<div class="a" style="left:58.3px;top:460.96px;width:2px;height:22.34px;background:#217346"></div>
<div class="a" style="left:854.90px;top:460.26px;width:74.40px;height:23.84px;border:2px solid #3a7f58"></div>
<div class="a" style="left:925.80px;top:480.80px;width:5px;height:5px;background:#217346;border:1px solid #fff"></div>
<!-- vertical scrollbar -->
<div class="a" style="left:980.5px;top:155px;width:16px;height:339px;background:#fff"></div>
<div class="a" style="left:980.5px;top:176.5px;width:15px;height:306.5px;background:#ededed;border-left:1px solid #e0e0e0"></div>
<div class="a" style="left:982px;top:156.2px;width:13.5px;height:13.3px;background:#fff;border:1px solid #dcdcdc"></div>
<svg class="a" style="left:985.5px;top:160.5px" width="7" height="4" viewBox="0 0 7 4"><path d="M0 4 L3.5 0 L7 4 Z" fill="#555"/></svg>
<div class="a" style="left:982.2px;top:469.3px;width:13px;height:13px;background:#fff;border:1px solid #d6d6d6"></div>
<div class="a" style="left:982.2px;top:483px;width:13px;height:12px;background:#fff;border:1px solid #dcdcdc"></div>
<svg class="a" style="left:985.5px;top:487.5px" width="7" height="4" viewBox="0 0 7 4"><path d="M0 0 H7 L3.5 4 Z" fill="#555"/></svg>
<div class="a" style="left:996.8px;top:0;width:2.2px;height:563px;background:#f0f0f0;border-left:1px solid #e4e4e4"></div>

<!-- sheet tabs -->
<div class="a" style="left:0;top:494px;width:996.5px;height:18px;background:#f0f0f0;border-top:1px solid #e2e2e2"></div>
<svg class="a" style="left:11.5px;top:500px" width="4" height="7" viewBox="0 0 4 7"><path d="M3.5 0.5 L0.7 3.5 L3.5 6.5" fill="none" stroke="#b0b0b0" stroke-width="1"/></svg>
<svg class="a" style="left:29.5px;top:500px" width="4" height="7" viewBox="0 0 4 7"><path d="M0.5 0.5 L3.3 3.5 L0.5 6.5" fill="none" stroke="#b0b0b0" stroke-width="1"/></svg>
<div class="a" style="left:58px;top:494px;width:48px;height:17px;background:#fff;border-bottom:1.5px solid #8a8a8a;border-left:1px solid #e0e0e0;border-right:1px solid #e0e0e0"></div>
<div class="t" style="top:497.41px;left:64.4px;font-size:10.5px;font-weight:bold;color:#2c6e49;;transform:scaleX(0.983);transform-origin:0 0">Hárok1</div>
<svg class="a" style="left:125.5px;top:496.5px" width="13" height="13" viewBox="0 0 13 13"><circle cx="6.5" cy="6.5" r="5.7" fill="none" stroke="#777" stroke-width="1"/><path d="M6.5 3.5 V9.5 M3.5 6.5 H9.5" stroke="#555" stroke-width="1.3"/></svg>
<div class="a" style="left:600px;top:495px;width:381px;height:16px;background:#e7e7e7"></div>
<div class="a" style="left:588px;top:495px;width:17.5px;height:16px;background:#f4f4f4"></div>
<div class="a" style="left:594.8px;top:499px;width:1.4px;height:1.4px;background:#777"></div>
<div class="a" style="left:594.8px;top:502.5px;width:1.4px;height:1.4px;background:#777"></div>
<div class="a" style="left:594.8px;top:506px;width:1.4px;height:1.4px;background:#777"></div>
<div class="a" style="left:605.7px;top:497.5px;width:12px;height:11.5px;background:#fff;border:1px solid #dcdcdc"></div>
<svg class="a" style="left:609.8px;top:500px" width="4" height="7" viewBox="0 0 4 7"><path d="M4 0 V7 L0 3.5 Z" fill="#444"/></svg>
<div class="a" style="left:961.5px;top:497.5px;width:8px;height:11.5px;background:#fff"></div>
<div class="a" style="left:969.2px;top:497.5px;width:11.5px;height:11.5px;background:#fff;border:1px solid #dcdcdc"></div>
<svg class="a" style="left:973.5px;top:500px" width="4" height="7" viewBox="0 0 4 7"><path d="M0 0 V7 L4 3.5 Z" fill="#444"/></svg>

<!-- status bar -->
<div class="a" style="left:0;top:512.3px;width:996.5px;height:17.5px;background:#1f6f45"></div>
<div class="t" style="top:516.26px;left:1px;font-size:9.5px;color:#e3efe8;;transform:scaleX(0.837);transform-origin:0 0">Pripravený</div>
<svg class="a" style="left:51px;top:515px" width="12" height="12" viewBox="0 0 12 12"><rect x="0.5" y="3" width="11" height="8.5" fill="none" stroke="#d8eadf" stroke-width="1"/><path d="M0.5 6 H11.5 M0.5 8.7 H11.5 M4 3 V11.5 M7.7 3 V11.5" stroke="#d8eadf" stroke-width="0.8"/><circle cx="2.5" cy="2.5" r="2.3" fill="#e8f3ec"/><rect x="5" y="1" width="6.5" height="2" fill="#e8f3ec"/></svg>
<div class="a" style="left:795px;top:512.3px;width:23px;height:17.5px;background:#175a35"></div>
<svg class="a" style="left:801px;top:515.5px" width="11" height="11" viewBox="0 0 11 11"><path d="M0.5 0.5 H10.5 V10.5 H0.5 Z M3.8 0.5 V10.5 M7.2 0.5 V10.5 M0.5 3.8 H10.5 M0.5 7.2 H10.5" fill="none" stroke="#cfe6d8" stroke-width="1"/></svg>
<svg class="a" style="left:824.5px;top:515.5px" width="11" height="11" viewBox="0 0 11 11"><rect x="0.5" y="0.5" width="10" height="10" rx="1" fill="none" stroke="#9fcfb2" stroke-width="1"/><path d="M3 2 V9 M8 2 V9" stroke="#9fcfb2" stroke-width="1"/></svg>
<svg class="a" style="left:848px;top:515.5px" width="11" height="11" viewBox="0 0 11 11"><path d="M0.5 0.5 V10.5 H10.5 V0.5" fill="none" stroke="#cfe6d8" stroke-width="1"/><rect x="1.5" y="1" width="6.5" height="6" fill="#e8f3ec"/><path d="M4.5 1 V7" stroke="#9a9" stroke-width="0.8"/></svg>
<div class="a" style="left:867.6px;top:520.2px;width:6.3px;height:1.6px;background:#cfe6d8"></div>
<div class="a" style="left:877.4px;top:520.3px;width:77.2px;height:1.4px;background:#b9dcc6"></div>
<div class="a" style="left:915px;top:518px;width:1.2px;height:6px;background:#cfe6d8"></div>
<div class="a" style="left:919px;top:516.3px;width:4.5px;height:9px;background:#eef6f1"></div>
<div class="a" style="left:958px;top:520.2px;width:5.6px;height:1.6px;background:#cfe6d8"></div>
<div class="a" style="left:960px;top:518.2px;width:1.6px;height:5.6px;background:#cfe6d8"></div>
<div class="t" style="top:516.73px;left:970.6px;font-size:8px;color:#d7e9de;;transform:scaleX(0.970);transform-origin:0 0">145 %</div>

<!-- taskbar -->
<div class="a" style="left:0;top:530px;width:996.5px;height:30.3px;background:linear-gradient(90deg,#2d4965 0%,#2d4a66 78%,#24494f 88%,#1f4a46 100%)"></div>
<div class="a" style="left:0;top:560.3px;width:999px;height:3px;background:#f2f2f2"></div>
<svg class="a" style="left:8.8px;top:538.6px" width="14" height="14" viewBox="0 0 14 14"><path d="M0 2 L5.8 1.1 V6.5 H0 Z M6.6 1 L13.3 0 V6.5 H6.6 Z M0 7.3 H5.8 V12.8 L0 11.9 Z M6.6 7.3 H13.3 V13.8 L6.6 12.9 Z" fill="#f4f6f8"/></svg>
<svg class="a" style="left:45px;top:535.5px" width="20" height="20" viewBox="0 0 20 20"><ellipse cx="10" cy="10" rx="9.3" ry="9.6" fill="#e5262a"/><ellipse cx="10" cy="10" rx="4.3" ry="6.6" fill="#2d4a66"/></svg>
<div class="a" style="left:40px;top:559px;width:32px;height:1.3px;background:#8fb6dc"></div>
<svg class="a" style="left:85.5px;top:536px" width="18.5" height="18.5" viewBox="-9.25 -9.25 18.5 18.5"><circle r="9" fill="#db3e35"/><path d="M0 0 L-7.8 4.5 A9 9 0 0 1 -7.8 -4.5 Z" fill="#db3e35"/><path d="M0 0 L7.8 -4.5 A9 9 0 0 1 0 9 Z" fill="#f7c331"/><path d="M0 0 L0 9 A9 9 0 0 1 -7.8 -4.5 Z" fill="#2aa24a"/><path d="M0 0 L-7.8 -4.5 A9 9 0 0 1 7.8 -4.5 Z" fill="#db3e35"/><circle r="4.2" fill="#fff"/><circle r="3.2" fill="#3b82e6"/></svg>
<svg class="a" style="left:124px;top:535.6px" width="19" height="18.5" viewBox="0 0 19 18.5"><rect width="19" height="18.5" rx="2.5" fill="#141820"/><path d="M1.5 9 C4 5.5 9 4.5 12 5 C14.5 5.5 16 7 17 8.5 C14 8 11 8.5 9 9.5 C6 9.5 3.5 9.5 1.5 9 Z" fill="#ee3a22"/><path d="M1 14 C3 10.5 7 10 10 11 C12 11.5 13 12.5 13.5 14 C10 13.5 6 15 1.5 17 Z" fill="#d62a1a"/><circle cx="16" cy="2.5" r="2.5" fill="#5a0f12"/></svg>
<svg class="a" style="left:164px;top:538px" width="17" height="14" viewBox="0 0 17 14"><rect x="7" y="1.5" width="9.5" height="11" fill="#f2d4d0"/><path d="M9 4 H15 M9 7 H15 M9 10 H15" stroke="#b33a33" stroke-width="1"/><rect x="0" y="0" width="10" height="14" fill="#b3352e"/><text x="1.5" y="11" font-size="9.5" font-weight="bold" font-family="Liberation Sans" fill="#fff">A</text></svg>
<div class="a" style="left:157.5px;top:559px;width:31.5px;height:1.3px;background:#8fb6dc"></div>
<svg class="a" style="left:203px;top:538.5px" width="17" height="13" viewBox="0 0 17 13"><rect x="8" y="1" width="8.5" height="11" fill="#dfe7f3"/><path d="M10 3 H15 M10 6 H15 M10 9 H15" stroke="#8aa6d6" stroke-width="1"/><rect x="0" y="0" width="10" height="13" fill="#2b579a"/><text x="0.8" y="10" font-size="8.5" font-weight="bold" font-family="Liberation Sans" fill="#fff">W</text></svg>
<div class="a" style="left:232.4px;top:530px;width:37.3px;height:30.3px;background:#21609c"></div>
<div class="a" style="left:232.4px;top:559px;width:37.3px;height:1.3px;background:#9cc7ef"></div>
<svg class="a" style="left:242.5px;top:538.5px" width="17" height="13.5" viewBox="0 0 17 13.5"><rect x="8" y="1" width="8.5" height="11.5" fill="#d9ead9"/><path d="M10 3 H15 M10 6 H15 M10 9 H15" stroke="#7fae84" stroke-width="1"/><rect x="0" y="0" width="9.5" height="13.5" fill="#1e7145"/><text x="1.5" y="10.5" font-size="8.5" font-weight="bold" font-family="Liberation Sans" fill="#fff">X</text></svg>
<svg class="a" style="left:281px;top:538px" width="17" height="15" viewBox="0 0 17 15"><rect x="7.5" y="1" width="9.5" height="12.5" fill="#f9dccf"/><path d="M10 4 H15 M10 7 H15 M10 10 H15" stroke="#d5633f" stroke-width="1"/><rect x="0" y="0" width="10" height="15" fill="#d24726"/><text x="1.8" y="11.5" font-size="9.5" font-weight="bold" font-family="Liberation Sans" fill="#fff">P</text></svg>
<div class="a" style="left:274px;top:559px;width:32px;height:1.3px;background:#8fb6dc"></div>
<svg class="a" style="left:320px;top:538.5px" width="17" height="13.5" viewBox="0 0 17 13.5"><rect x="8" y="2" width="8.5" height="9" fill="#e8f0fb"/><path d="M8 2 L12.3 6 L16.5 2" fill="none" stroke="#0a64c8" stroke-width="1"/><rect x="0" y="0" width="10" height="13.5" fill="#0f72d6"/><text x="1.2" y="10.5" font-size="9" font-weight="bold" font-family="Liberation Sans" fill="#fff">O</text></svg>
<svg class="a" style="left:359.3px;top:536.4px" width="17.6" height="17.6" viewBox="0 0 17.6 17.6"><circle cx="8.8" cy="8.8" r="8.6" fill="#f4f4f4"/><path d="M4.5 5.5 L6.5 3.5 C8.5 2.8 11.5 3 12.8 5 C13.8 7 13.5 10.5 12.5 12.8 C11.5 14.3 9 14.2 8.8 12.5 C9.5 11.8 10.5 12 10.8 12.5 C10.8 11 9.5 10.5 8 10.5 C6 10.5 4.5 9 4.5 7 Z" fill="#2dbe60"/><path d="M4.5 5.5 H6.5 V3.5 Z" fill="#1f8a43"/></svg>
<svg class="a" style="left:399.7px;top:535.8px" width="14.5" height="18.5" viewBox="0 0 14.5 18.5"><rect width="14.5" height="18.5" rx="1" fill="#eef0f2"/><rect x="2" y="2" width="10.5" height="3.2" fill="#9aa5b0"/><g fill="#56616c"><rect x="2" y="7" width="2" height="2"/><rect x="6.2" y="7" width="2" height="2"/><rect x="10.5" y="7" width="2" height="2"/><rect x="2" y="10.7" width="2" height="2"/><rect x="6.2" y="10.7" width="2" height="2"/><rect x="10.5" y="10.7" width="2" height="2"/><rect x="2" y="14.4" width="2" height="2"/><rect x="6.2" y="14.4" width="2" height="2"/><rect x="10.5" y="14.4" width="2" height="2"/></g></svg>
<svg class="a" style="left:437.2px;top:536px" width="18.5" height="18.5" viewBox="0 0 18.5 18.5"><path d="M0 0 H13.5 L18.5 5 V18.5 H0 Z" fill="#f28a1f"/><path d="M13.5 0 V5 H18.5" fill="#f7b36a"/><circle cx="9" cy="8" r="4.5" fill="none" stroke="#fff" stroke-width="2"/><path d="M9 8 H13.5" stroke="#fff" stroke-width="2"/><rect x="5" y="14" width="8" height="2" fill="#fff" opacity="0.8"/></svg>
<svg class="a" style="left:476.4px;top:537px" width="17.5" height="17" viewBox="0 0 17.5 17"><path d="M0 1 H12 V17 H0 Z" fill="#e8eee4"/><rect x="1.5" y="6" width="9.5" height="9" fill="#69b43a"/><path d="M1.5 11 C4 8 7 9 11 11 V15 H1.5 Z" fill="#f5d645"/><path d="M8 12 L17 1" stroke="#9a8a3a" stroke-width="1.4"/></svg>
<div class="a" style="left:470.2px;top:559px;width:31.6px;height:1.3px;background:#8fb6dc"></div>
<svg class="a" style="left:515.6px;top:538px" width="17.5" height="14" viewBox="0 0 17.5 14"><path d="M0 0 H6 L8 2 H17.5 V14 H0 Z" fill="#f4c248"/><rect x="0" y="4" width="17.5" height="10" fill="#fbd66e"/><rect x="4.5" y="8" width="8.5" height="6" fill="#3a8fd9"/><rect x="6.5" y="9.5" width="4.5" height="4.5" fill="#cfe6fb"/></svg>
<svg class="a" style="left:553.8px;top:536px" width="18" height="18" viewBox="0 0 18 18"><circle cx="9" cy="9" r="8.8" fill="#1db954"/><path d="M4 6.5 C7 5.5 11 5.7 14 7.2 M4.6 9.3 C7.2 8.6 10.5 8.8 13 10 M5.2 11.9 C7.3 11.4 10 11.5 12 12.5" fill="none" stroke="#16281c" stroke-width="1.4" stroke-linecap="round"/></svg>
<svg class="a" style="left:592.8px;top:535.5px" width="19.6" height="18.5" viewBox="0 0 19.6 18.5"><rect width="19.6" height="18.5" rx="2" fill="#ec5a37"/><path d="M13.5 4 H7 V14.5 H13.5" fill="none" stroke="#fff" stroke-width="2.6"/></svg>
<div class="a" style="left:587px;top:559px;width:31px;height:1.3px;background:#8fb6dc"></div>
<!-- tray -->
<svg class="a" style="left:837.6px;top:541.5px" width="10.5" height="6.5" viewBox="0 0 10.5 6.5"><path d="M0.6 6 L5.25 0.8 L9.9 6" fill="none" stroke="#c9d3dc" stroke-width="1.2"/></svg>
<svg class="a" style="left:854.5px;top:540.5px" width="14" height="8.5" viewBox="0 0 14 8.5"><rect x="3" y="3" width="11" height="5.5" fill="#e8eef2"/><path d="M0.5 0.5 L3 3 M2.5 0.5 V2.5" stroke="#e8eef2" stroke-width="1"/></svg>
<svg class="a" style="left:875.5px;top:540px" width="11" height="11" viewBox="0 0 11 11"><path d="M0.8 10.5 A9.5 9.5 0 0 1 10.3 1 M3 10.5 A7.3 7.3 0 0 1 10.3 3.2 M5.2 10.5 A5.1 5.1 0 0 1 10.3 5.4 M7.4 10.5 A2.9 2.9 0 0 1 10.3 7.6" fill="none" stroke="#aab6c0" stroke-width="0.9"/><circle cx="10" cy="10" r="1" fill="#e8eef2"/></svg>
<svg class="a" style="left:892.6px;top:540.5px" width="12" height="9" viewBox="0 0 12 9"><path d="M0.5 3 H3 L6.5 0.5 V8.5 L3 6 H0.5 Z" fill="none" stroke="#c9d3dc" stroke-width="1"/><path d="M8.5 2.5 C9.5 3.5 9.5 5.5 8.5 6.5 M10 1 C11.8 3 11.8 6 10 8" fill="none" stroke="#7f8f9a" stroke-width="0.9"/></svg>
<div class="t" style="top:540.53px;left:914.6px;font-size:10px;color:#e8eef2;;transform:scaleX(0.804);transform-origin:0 0">SLK</div>
<div class="t" style="top:533.76px;left:955.2px;font-size:9.5px;color:#e8eef2;;transform:scaleX(0.989);transform-origin:0 0">9:38</div>
<div class="t" style="top:548.16px;left:942.5px;font-size:9.5px;color:#e8eef2;;transform:scaleX(0.944);transform-origin:0 0">18. 3. 2019</div>
<div class="a" style="left:992.5px;top:531px;width:1px;height:29px;background:#6f8a8a"></div>

<!-- watermark -->
<svg class="a" style="left:933.5px;top:488.5px" width="28" height="30" viewBox="0 0 28 30"><path d="M14 0 L27.5 7.5 V22.5 L14 30 L0.5 22.5 V7.5 Z" fill="#86cf5a" opacity="0.92"/><path d="M14 15 L27.5 7.5 V22.5 L14 30 Z" fill="#6cbd45" opacity="0.9"/><path d="M14 0 L27.5 7.5 L14 15 L0.5 7.5 Z" fill="#9ddc74" opacity="0.9"/><path d="M16 17 L24 13 V21.5 L16 25.5 Z" fill="#f0f0f0" opacity="0.9"/></svg>
<div class="t" style="top:521.56px;left:921.2px;font-size:9.5px;font-weight:bold;color:rgba(165,172,168,0.85);;transform:scaleX(0.888);transform-origin:0 0">IT ACADEMY</div>

<!-- cursor -->
<svg class="a" style="left:764.5px;top:486.5px" width="11" height="15" viewBox="0 0 11 15"><path d="M0.6 0.6 V11.8 L3.2 9.4 L5.3 14 L7.3 13.1 L5.3 8.7 H9.3 Z" fill="#fff" stroke="#333" stroke-width="0.9" stroke-linejoin="round"/></svg>
</body></html>
